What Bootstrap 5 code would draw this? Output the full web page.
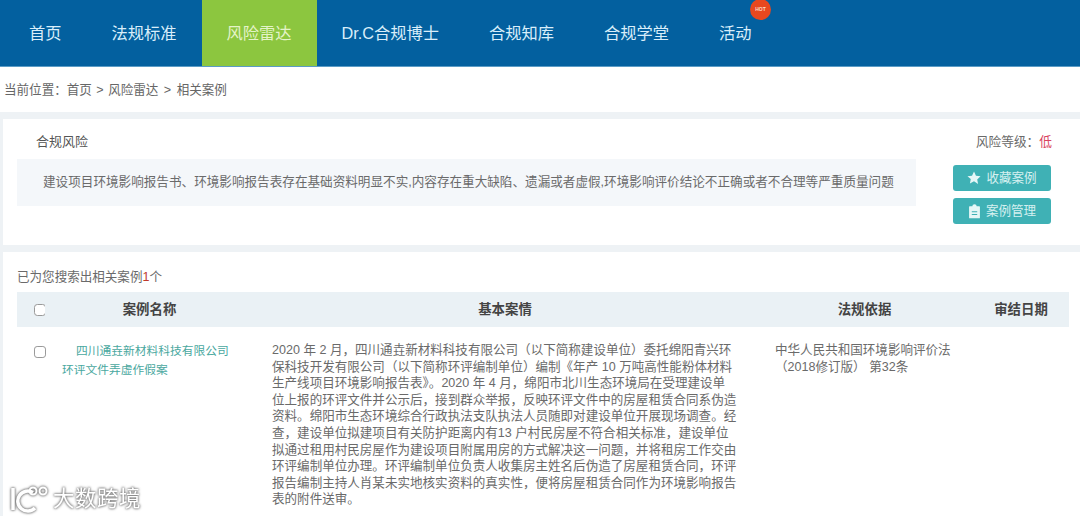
<!DOCTYPE html>
<html lang="zh-CN">

<head>
    <meta charset="UTF-8">
    <title>相关案例</title>
    <link href="https://cdn.jsdelivr.net/npm/bootstrap@5.3.0/dist/css/bootstrap.min.css" rel="stylesheet">
    <style>
        html, body { height: 100%; overflow: hidden; }

        body {
            background-color: #eef2f5;
            color: #6a6a6a;
            font-family: "Liberation Sans", "Noto Sans CJK SC", sans-serif;
            font-size: 12.55px;
        }

        .top-nav { height: 67px; background-color: #03609f; padding-left: 4px; border-bottom: 1px solid #5b9cc6; }

        .top-link {
            position: relative;
            display: flex;
            align-items: center;
            height: 66px;
            padding: 0 25px;
            color: #d9eefa;
            font-size: 16.25px;
            text-decoration: none;
        }

        .top-link.is-active { background-color: #8cc63f; color: #e4f3c8; }

        .hot-mark {
            position: absolute;
            left: 56px;
            top: -1px;
            width: 21px;
            height: 21px;
            border-radius: 50%;
            background-color: #e8481f;
            color: #fbd9c8;
            font-size: 5px;
            font-weight: 700;
            line-height: 21px;
            text-align: center;
        }

        .crumb-bar { height: 45px; padding: 1px 0 0 4px; background-color: #fff; color: #666; }
        .crumb-sep { margin: 0 1px; }
        .crumb-sep + .crumb-sep { margin: 0 2px; }

        .risk-panel { height: 126px; margin: 7px 0 7px 3px; background-color: #fff; padding: 15px 28px 0 14px; }

        .risk-title { padding-left: 19px; font-size: 13px; line-height: 16px; color: #555; }
        .risk-level { line-height: 16px; font-size: 12.7px; }
        .risk-low { color: #d9435e; }

        .risk-desc {
            width: 899px;
            height: 47px;
            margin-top: 9px;
            padding-left: 26px;
            background-color: #f4f7fa;
            font-size: 12.6px;
            line-height: 47px;
            white-space: nowrap;
        }

        .side-btn {
            display: flex;
            align-items: center;
            justify-content: center;
            gap: 5px;
            width: 98px;
            height: 26px;
            padding: 0;
            border: 0;
            border-radius: 3px;
            background-color: #3fb1b5;
            color: #d5f0f0;
            font-size: 12.55px;
        }

        .side-btns { margin: 15px 1px 0 0; gap: 7px; }

        .result-panel { height: 264px; margin-left: 3px; background-color: #fff; padding: 17px 11px 0 14px; }
        .result-count { line-height: 16px; margin-bottom: 7px; }
        .result-num { color: #c0392b; }

        .case-table { width: 1052px; table-layout: fixed; border-collapse: collapse; }
        .case-table th {
            height: 35px;
            padding: 1px 18px 0;
            background-color: #eaf1f5;
            color: #444;
            font-size: 13.4px;
            font-weight: 700;
            text-align: center;
        }
        .case-table td { padding: 15px 18px 0; line-height: 16.6px; vertical-align: top; }
        .case-table .check-cell { padding: 0 0 0 17px; }
        .case-table td.check-cell { padding-top: 19px; }
        .check-box { display: block; width: 12px; height: 12px; margin: 0; border-color: #999; border-radius: 2px; }

        .case-table td.name-cell { padding-right: 0; padding-left: 17px; white-space: nowrap; }
        .case-name { font-size: 11.75px; line-height: 18.5px; color: #4aa8a0; text-decoration: none; }
        .name-first { padding-left: 14px; }
        .case-table td.law-cell { padding-left: 19px; }

        .water-mark {
            position: absolute;
            left: 8px;
            top: 483px;
            gap: 3px;
            color: #fff;
            font-size: 21.5px;
            letter-spacing: 0.5px;
            filter: drop-shadow(0 0 1px #777) drop-shadow(0 0 1px #999);
        }
    </style>
</head>

<body>
    <nav class="top-nav d-flex">
        <a class="top-link" href="#">首页</a>
        <a class="top-link" href="#">法规标准</a>
        <a class="top-link is-active" href="#">风险雷达</a>
        <a class="top-link" href="#">Dr.C合规博士</a>
        <a class="top-link" href="#">合规知库</a>
        <a class="top-link" href="#">合规学堂</a>
        <a class="top-link" href="#">活动<span class="hot-mark">HOT</span></a>
    </nav>

    <div class="crumb-bar d-flex align-items-center">当前位置：首页<span class="crumb-sep">&nbsp;&gt;&nbsp;</span>风险雷达<span class="crumb-sep">&nbsp;&gt;&nbsp;</span>相关案例</div>

    <section class="risk-panel d-flex justify-content-between">
        <div>
            <div class="risk-title">合规风险</div>
            <div class="risk-desc">建设项目环境影响报告书、环境影响报告表存在基础资料明显不实,内容存在重大缺陷、遗漏或者虚假,环境影响评价结论不正确或者不合理等严重质量问题</div>
        </div>
        <div class="d-flex flex-column align-items-end">
            <div class="risk-level">风险等级：<span class="risk-low">低</span></div>
            <div class="side-btns d-flex flex-column">
                <button class="side-btn" type="button">
                    <svg width="14" height="14" viewBox="0 0 24 24" fill="#e6f7f7"><path d="M12 1l3.4 7.2 7.8 1-5.7 5.4 1.5 7.8L12 17.6l-7 3.8 1.5-7.8L.8 9.2l7.800-1z"/></svg>
                    收藏案例
                </button>
                <button class="side-btn" type="button">
                    <svg width="13" height="15" viewBox="0 0 24 27" fill="#e6f7f7"><path d="M3 4h5a4 4 0 0 1 8 0h5a1 1 0 0 1 1 1v20a1 1 0 0 1-1 1H3a1 1 0 0 1-1-1V5a1 1 0 0 1 1-1zm4 9v2h10v-2zm0 5v2h10v-2z" fill-rule="evenodd"/></svg>
                    案例管理
                </button>
            </div>
        </div>
    </section>

    <section class="result-panel">
        <div class="result-count">已为您搜索出相关案例<span class="result-num">1</span>个</div>
        <table class="case-table">
            <colgroup>
                <col style="width: 28px">
                <col style="width: 209px">
                <col style="width: 502px">
                <col style="width: 217px">
                <col style="width: 96px">
            </colgroup>
            <thead>
                <tr>
                    <th class="check-cell"><input class="form-check-input check-box" type="checkbox"></th>
                    <th>案例名称</th>
                    <th>基本案情</th>
                    <th>法规依据</th>
                    <th>审结日期</th>
                </tr>
            </thead>
            <tbody>
                <tr>
                    <td class="check-cell"><input class="form-check-input check-box" type="checkbox"></td>
                    <td class="name-cell"><a class="case-name d-block" href="#"><span class="name-first d-block">四川通垚新材料科技有限公司</span>环评文件弄虚作假案</a></td>
                    <td>2020 年 2 月，四川通垚新材料科技有限公司（以下简称建设单位）委托绵阳青兴环<br>保科技开发有限公司（以下简称环评编制单位）编制《年产 10 万吨高性能粉体材料<br>生产线项目环境影响报告表》。2020 年 4 月，绵阳市北川生态环境局在受理建设单<br>位上报的环评文件并公示后，接到群众举报，反映环评文件中的房屋租赁合同系伪造<br>资料。绵阳市生态环境综合行政执法支队执法人员随即对建设单位开展现场调查。经<br>查，建设单位拟建项目有关防护距离内有13 户村民房屋不符合相关标准，建设单位<br>拟通过租用村民房屋作为建设项目附属用房的方式解决这一问题，并将租房工作交由<br>环评编制单位办理。环评编制单位负责人收集房主姓名后伪造了房屋租赁合同，环评<br>报告编制主持人肖某未实地核实资料的真实性，便将房屋租赁合同作为环境影响报告<br>表的附件送审。</td>
                    <td class="law-cell">中华人民共和国环境影响评价法（2018修订版） 第32条</td>
                    <td></td>
                </tr>
            </tbody>
        </table>
    </section>

    <div class="water-mark d-flex align-items-center">
        <svg width="42" height="28" viewBox="0 0 42 28" fill="none" stroke="#fff" stroke-width="3.5">
            <path d="M5 3v22"/>
            <path d="M25 7.500a10 10 0 1 0 2 15.500"/>
            <circle cx="25" cy="6" r="3.500" stroke-width="2"/>
            <circle cx="35" cy="6" r="3.500" stroke-width="2"/>
        </svg>
        <span>大数跨境</span>
    </div>
</body>

</html>
